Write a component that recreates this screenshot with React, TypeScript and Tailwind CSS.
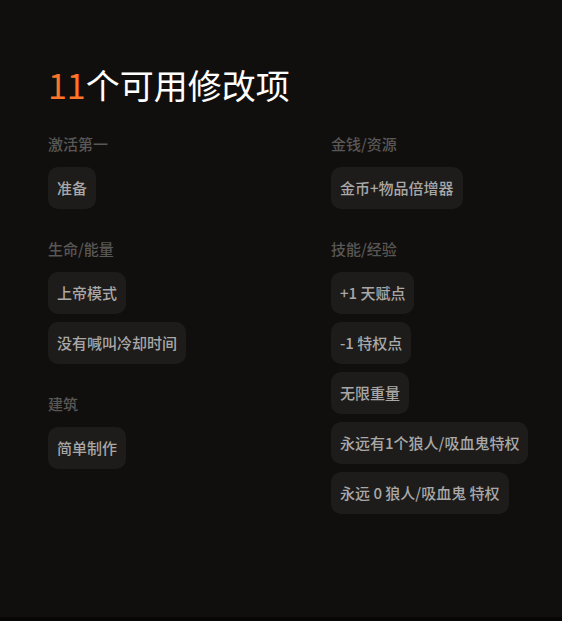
type ModGroup = {
  title: string;
  mods: string[];
};

const MOD_COUNT = 11;

const COLUMNS: ModGroup[][] = [
  [
    { title: '激活第一', mods: ['准备'] },
    { title: '生命/能量', mods: ['上帝模式', '没有喊叫冷却时间'] },
    { title: '建筑', mods: ['简单制作'] },
  ],
  [
    { title: '金钱/资源', mods: ['金币+物品倍增器'] },
    {
      title: '技能/经验',
      mods: ['+1 天赋点', '-1 特权点', '无限重量', '永远有1个狼人/吸血鬼特权', '永远 0 狼人/吸血鬼 特权'],
    },
  ],
];

function Group({ title, mods }: ModGroup) {
  return (
    <section>
      <h3 className="mb-3 text-[15px] leading-[22px] font-medium text-[#585756]">{title}</h3>
      <ul className="flex flex-col items-start gap-2">
        {mods.map(mod => (
          <li
            key={mod}
            className="rounded-[10px] bg-[#1d1c1b] px-[9px] py-[10px] text-[15px] leading-[22px] font-medium whitespace-nowrap text-[#a9a8a7]"
          >
            {mod}
          </li>
        ))}
      </ul>
    </section>
  );
}

export default function App() {
  return (
    <div lang="zh-CN" className="flex min-h-screen flex-col border-b-4 border-[#090706] bg-[#110f0d] font-['Noto_Sans_CJK_SC',sans-serif]">
      <main className="grow pt-[59px] pr-6 pb-20 pl-12">
        <h2 className="mb-[22px] text-[34px] leading-[52px] font-normal text-white">
          <span className="text-[#ff7429]">{MOD_COUNT}</span>个可用修改项
        </h2>
        <div className="grid grid-cols-2 gap-19">
          {COLUMNS.map((groups, i) => (
            <div key={i} className="flex flex-col gap-[29px]">
              {groups.map(g => (
                <Group key={g.title} {...g} />
              ))}
            </div>
          ))}
        </div>
      </main>
    </div>
  );
}
